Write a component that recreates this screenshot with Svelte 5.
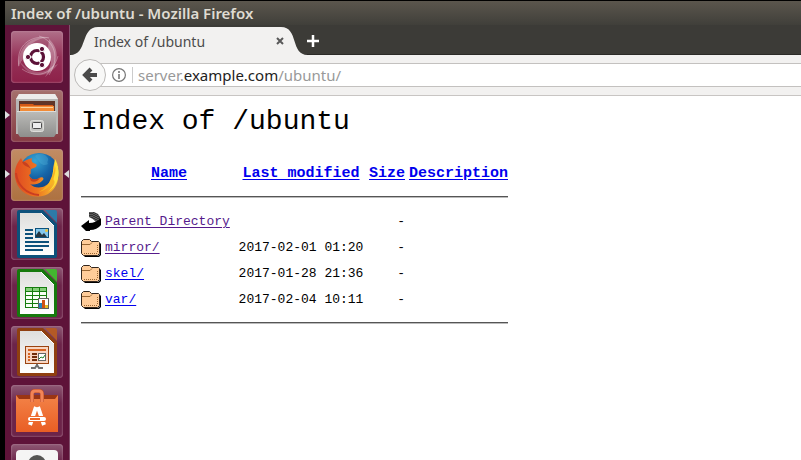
<script>
  const host = 'example.com';
  const path = '/ubuntu';

  const apps = [
    { id: 'dash', name: 'Search your computer' },
    { id: 'files', name: 'Files', running: true },
    { id: 'firefox', name: 'Firefox Web Browser', running: true, focused: true },
    { id: 'writer', name: 'Writer' },
    { id: 'calc', name: 'Calc' },
    { id: 'impress', name: 'Impress' },
    { id: 'software', name: 'Ubuntu Software' },
    { id: 'settings', name: 'System Settings' }
  ];

  // sheet colours of the office icons
  const office = {
    writer: { edge: '#0d517b', fold: '#2c7aa8' },
    calc: { edge: '#16790c', fold: '#43b62f' },
    impress: { edge: '#8f3f10', fold: '#b45a26' }
  };

  const entries = [
    { name: 'Parent Directory', href: '#parent', up: true, visited: true },
    { name: 'mirror/', href: '#mirror', date: '2017-02-01 01:20', visited: true },
    { name: 'skel/', href: '#skel', date: '2017-01-28 21:36' },
    { name: 'var/', href: '#var', date: '2017-02-04 10:11' }
  ];
</script>

<div class="desktop">
  <header class="titlebar">Index of {path} - Mozilla Firefox</header>

  <div class="workspace">
    <nav class="launcher" aria-label="Launcher">
      {#each apps as app}
        <button class="tile {app.id}" class:running={app.running} class:focused={app.focused} aria-label={app.name}>
          <svg viewBox="0 0 52 52" width="52" height="52">
            {#if app.id === 'dash'}
              <path d="M7 36C7 16 18 5 39 6C25 7 15 14 13 27Q10 30 7 36Z" fill="#fff" opacity=".25" />
              <path d="M38 8C49 18 49 34 34 46C41 35 42 26 37 17Z" fill="#fff" opacity=".3" />
              <path d="M47 33C36 49 18 48 8 30C20 43 31 44 42 35Z" fill="#fff" opacity=".2" />
              <path d="M8 35C4 15 20 3 38 7M28 5C44 10 49 27 38 44M47 25C42 44 25 48 11 38" fill="none" stroke="#fff" opacity=".3" />
              <circle cx="26" cy="26" r="14" fill="#fff" />
              <circle cx="26" cy="26" r="6.500" fill="none" stroke="#5c1238" stroke-width="3.200" />
              <path d="M26 26H16M26 26L31 17.500M26 26L31 34.500" stroke="#fff" stroke-width="1.200" />
              <g fill="#5c1238" stroke="#fff" stroke-width="1">
                <circle cx="17" cy="26" r="2.600" />
                <circle cx="31" cy="18" r="2.600" />
                <circle cx="31" cy="34" r="2.600" />
              </g>
            {:else if app.id === 'files'}
              <path d="M8 4H44L47 9V44H5V9Z" fill="#b8b8b6" />
              <path d="M8 4H44L47 9H5Z" fill="#ececea" />
              <rect x="8" y="11" width="36" height="12" fill="#603528" />
              <path d="M10 14H22L23 15H42V17H9V14Z" fill="#d55a16" />
              <rect x="9" y="16" width="34" height="6" fill="#f28b36" />
              <rect x="10" y="17" width="32" height="1" fill="#fbd29d" />
              <path d="M6 21H45V44L43 47H9L7 44Z" fill="url(#metal)" />
              <path d="M6 21.500H45" stroke="#dddddb" />
              <rect x="19.500" y="30.500" width="13" height="11" rx="2" fill="#c7c7c4" stroke="#dededb" />
              <rect x="21.500" y="32.500" width="9" height="6" rx="1" fill="#eee" stroke="#4b4b4b" />
            {:else if app.id === 'firefox'}
              <circle cx="28" cy="24" r="20" fill="url(#globe)" />
              <path d="M24 7C27 4 33 4 36 8C39 11 35 12 37 15C32 18 29 14 27 11Z" fill="#4ba9d4" opacity=".4" />
              <path d="M44 12C50 22 49 38 37 45C22 52 6 44 4 28C3 20 6 14 10 9L12 13C16 10 19 10 21 9C20 12 21 14 25 15C27 17 24 19 20 20C19 23 21 25 18 26C20 31 24 32 28 29C32 27 34 30 31 32C27 36 21 36 19 35C25 41 36 39 40 31C44 24 40 22 44 12Z" fill="url(#fox)" />
              <path d="M44 10C51 22 48 36 37 43C42 38 45 34 43 31L39 36C43 30 40 25 43 20C44 17 43 13 44 10Z" fill="#ffe13b" />
              <path d="M44 17C46 23 41 30 43 32C39 37 35 41 28 43C39 37 39 30 42 25Z" fill="#f8b321" />
              <path d="M11 13C14 12 17 14 20 20C17 17 13 18 11 13Z" fill="#c74020" />
              <path d="M18 27C20 31 24 31 29 29C27 32 23 34 20 32Z" fill="#c7421b" />
              <path d="M5 24C6 36 15 45 28 46" fill="none" stroke="#cb3e21" stroke-width="2" />
            {:else if office[app.id]}
              <path d="M8 2H32L46 16V48Q46 50 44 50H8Q6 50 6 48V4Q6 2 8 2Z" fill={office[app.id].edge} />
              <path d="M34 2H44Q46 2 46 4V15Z" fill={office[app.id].fold} />
              <path d="M9 5H30L43 18V47H9Z" fill="url(#paper)" />
              <path d="M30 5L43 18" stroke="#fff" stroke-width="1" />
              {#if app.id === 'writer'}
                <path d="M14 22H22M14 26H22M14 30H22M14 34H38M14 38H38M14 42H32" stroke="#0d517b" stroke-width="2" />
                <rect x="24.500" y="20.500" width="13" height="9" fill="#83c8ed" stroke="#0d517b" />
                <path d="M25 29V27L28 23L31 27L33 25L36 29Z" fill="#263640" />
                <circle cx="35.500" cy="22.500" r="1.500" fill="#edc43d" />
              {:else if app.id === 'calc'}
                <rect x="14.500" y="20.500" width="21" height="20" fill="#f8fff5" stroke="#167c0e" />
                <rect x="15" y="21" width="20" height="4" fill="#86ce7b" />
                <path d="M14 24.500H36M14 28.500H36M14 32.500H36M14 36.500H36M21.500 20V41M28.500 20V41" stroke="#167c0e" fill="none" />
                <rect x="27.500" y="31.500" width="10" height="10" fill="#fff" stroke="#606060" />
                <rect x="28" y="36" width="3" height="5" fill="#2584bd" />
                <rect x="31" y="33" width="3" height="8" fill="#d05117" />
                <rect x="34" y="38" width="3" height="3" fill="#e5ba26" />
              {:else}
                <rect x="14.500" y="20.500" width="23" height="17" fill="#f8d5c1" stroke="#9b430f" />
                <rect x="17" y="23" width="18" height="2" fill="#d66421" />
                <path d="M17 28H19M17 31H19M17 34H19" stroke="#d66421" stroke-width="2" />
                <path d="M21 28H26M21 31H26M21 34H26" stroke="#722d0a" stroke-width="2" />
                <rect x="27.500" y="27.500" width="7" height="7" fill="#fff" stroke="#666" />
                <path d="M28 33L30 31L32 32L34 29" stroke="#22842b" fill="none" />
                <path d="M26 38V40M20 42H24L26 39L28 42H32" stroke="#707070" stroke-width="2" fill="none" />
              {/if}
            {:else if app.id === 'software'}
              <path d="M5 10H47V16H5Z" fill="#9b3514" />
              <path d="M5 10L8 14H44L47 10V47H5Z" fill="url(#bag)" />
              <path d="M21 17V9Q21 6 24 6H28Q31 6 31 9V17" fill="none" stroke="#bb4b25" stroke-width="4" />
              <path d="M21 17V9Q21 6 24 6H28Q31 6 31 9V17" fill="none" stroke="#f28457" stroke-width="3" />
              <g stroke="#fff" stroke-width="4">
                <line x1="25" y1="22" x2="19" y2="40" />
                <line x1="27" y1="22" x2="33" y2="40" />
              </g>
              <rect x="16" y="31" width="20" height="6" rx="2" fill="#ee6c2f" />
              <rect x="17" y="32" width="18" height="4" rx="2" fill="#fff" />
              <rect x="19" y="33" width="10" height="2" fill="#ed6728" />
            {:else}
              <rect x="5" y="6" width="42" height="42" rx="4" fill="#f5f5f4" />
              <circle cx="26" cy="20" r="9" fill="#555553" />
              <circle cx="26" cy="22" r="4" fill="#bbb" />
            {/if}
          </svg>
        </button>
      {/each}
    </nav>

    <div class="browser">
      <div class="tabs">
        <div class="tab">
          <svg class="tab-shape" viewBox="0 0 238 29" preserveAspectRatio="none">
            <path d="M0 29C18 29 10 1 28 1H211C229 1 220 29 238 29Z" fill="#f2f1f0" />
          </svg>
          <span class="tab-title">Index of {path}</span>
          <button class="icon-button" aria-label="Close tab">
            <svg viewBox="0 0 8 8" width="8" height="8"><path d="M1 1L7 7M7 1L1 7" stroke="#595959" stroke-width="2" /></svg>
          </button>
        </div>
        <button class="icon-button new-tab" aria-label="New tab">
          <svg viewBox="0 0 14 14" width="14" height="14"><path d="M7 1V13M1 7H13" stroke="#fff" stroke-width="2.500" /></svg>
        </button>
      </div>

      <div class="toolbar">
        <button class="back" aria-label="Back">
          <svg viewBox="0 0 16 16" width="16" height="16"><path d="M9 2L3 8L9 14M3 8H15" fill="none" stroke="#4a4a4a" stroke-width="4" /></svg>
        </button>
        <div class="urlbar">
          <svg viewBox="0 0 14 14" width="14" height="14">
            <circle cx="7" cy="7" r="6.400" fill="none" stroke="#777" stroke-width="1.200" />
            <path d="M7 6V11M7 3V5" stroke="#777" stroke-width="1.600" />
          </svg>
          <span class="url">server.<b>{host}</b>{path}/</span>
        </div>
      </div>

      <main class="page">
        <h1>Index of {path}</h1>
        <table>
          <colgroup>
            <col class="c-icon" /><col class="c-name" /><col class="c-date" /><col class="c-size" /><col class="c-desc" />
          </colgroup>
          <thead>
            <tr>
              <th></th>
              <th><a href="#name">Name</a></th>
              <th><a href="#modified">Last modified</a></th>
              <th><a href="#size">Size</a></th>
              <th class="right"><a href="#description">Description</a></th>
            </tr>
          </thead>
          <tbody>
            <tr class="rule"><td colspan="5"><hr /></td></tr>
            {#each entries as entry}
              <tr class="entry">
                <td>
                  <svg viewBox="0 0 20 22" width="20" height="22">
                    {#if entry.up}
                      <path d="M8 1H13L17 3L19 6V9L15 11L12 8L8 6Z" fill="#333" />
                      <path d="M9 1V6M11 1V7M13 2V9M15 3V10M17 4V10" stroke="#888" stroke-dasharray="1 1" />
                      <path d="M0 15L8 9V12Q15 12 20 7V14Q16 19 9 19V20H5Z" fill="#000" />
                    {:else}
                      <path d="M3 19H17L19 17V6L20 7V18L18 20H4Z" fill="#000" />
                      <path d="M.5 4.500L2.500 2.500H8.500L10.500 4.500H17.500L18.500 5.500V16.500L16.500 18.500H2.500L.5 16.500Z" fill="#ffcc99" stroke="#33261d" />
                      <path d="M1 7.500H9L11 5.500" fill="none" stroke="#996633" />
                      <path d="M3 16.500H16M16.500 8V16" stroke="#996633" stroke-dasharray="1 1" />
                    {/if}
                  </svg>
                </td>
                <td><a class:visited={entry.visited} href={entry.href}>{entry.name}</a></td>
                <td class="center">{entry.date ?? ''}</td>
                <td class="right">-</td>
                <td></td>
              </tr>
            {/each}
            <tr class="rule"><td colspan="5"><hr /></td></tr>
          </tbody>
        </table>
      </main>
    </div>
  </div>

  <!-- shared gradients -->
  <svg class="defs" width="0" height="0" aria-hidden="true">
    <defs>
      <linearGradient id="metal" x1="0" y1="0" x2="0" y2="1"><stop offset="0" stop-color="#bcbcb9" /><stop offset="1" stop-color="#8e8e8c" /></linearGradient>
      <linearGradient id="paper" x1="0" y1="0" x2="0" y2="1"><stop offset="0" stop-color="#dededc" /><stop offset="1" stop-color="#fff" /></linearGradient>
      <linearGradient id="bag" x1="0" y1="0" x2="0" y2="1"><stop offset="0" stop-color="#f38348" /><stop offset="1" stop-color="#e95e24" /></linearGradient>
      <linearGradient id="fox" x1="0" y1="0" x2="1" y2="0"><stop offset="0" stop-color="#df4a22" /><stop offset=".5" stop-color="#ed7420" /><stop offset="1" stop-color="#fac72e" /></linearGradient>
      <radialGradient id="globe" cx=".4" cy=".2" r=".8"><stop offset="0" stop-color="#37a6d5" /><stop offset=".5" stop-color="#1665a8" /><stop offset="1" stop-color="#103a79" /></radialGradient>
    </defs>
  </svg>
</div>

<style>
  :global(body) {
    background: #000;
  }

  .desktop {
    box-sizing: border-box;
    height: 100vh;
    display: flex;
    flex-direction: column;
    padding: 1px 0 0 5px;
    overflow: hidden;
    font-family: "Noto Sans", "Open Sans", sans-serif;
    font-size: 15px;
  }

  .titlebar {
    flex: none;
    padding-left: 6px;
    line-height: 24px;
    font-weight: 600;
    color: #dfdbd2;
    background: linear-gradient(#5b564d, #403f3a);
  }

  .workspace {
    flex: 1;
    min-height: 0;
    display: flex;
  }

  .launcher {
    flex: none;
    display: flex;
    flex-direction: column;
    gap: 7px;
    padding: 6px;
    background: #5e1339;
    border-right: 1px solid #81506b;
    overflow: hidden;
  }

  button {
    padding: 0;
    border: 0;
    background: none;
    cursor: pointer;
  }

  svg {
    display: block;
  }

  .tile {
    position: relative;
    flex: none;
    width: 52px;
    height: 52px;
    border-radius: 4px;
    background: linear-gradient(#8d5873, #6c2449 35%, #6c2449);
    box-shadow: inset 0 0 2px #c199ad;
  }

  .dash { background: linear-gradient(#b07089, #963258 50%, #8d2149); }
  .files { background: linear-gradient(#a5716c, #863b43); }
  .firefox { background: linear-gradient(#c28c64, #ad7140); }

  .running::before,
  .focused::after {
    content: '';
    position: absolute;
    top: 21px;
    border: 4px solid transparent;
  }

  .running::before {
    left: -6px;
    border-left: 5px solid #ddd;
    border-right: 0;
  }

  .focused::after {
    right: -6px;
    border-right: 5px solid #ddd;
    border-left: 0;
  }

  .browser {
    flex: 1;
    min-width: 0;
    display: flex;
    flex-direction: column;
  }

  .tabs {
    display: flex;
    height: 30px;
    background: #3c3b37;
    box-shadow: inset 0 -1px #2b2a27;
  }

  .tab {
    position: relative;
    display: flex;
    align-items: center;
    justify-content: space-between;
    box-sizing: border-box;
    width: 238px;
    padding: 2px 24px 0;
    font-size: 14px;
    color: #4c4c4c;
  }

  .tab-shape {
    position: absolute;
    left: 0;
    top: 1px;
    width: 100%;
    height: 29px;
  }

  .tab-title,
  .tab .icon-button {
    position: relative;
  }

  .new-tab {
    margin-left: -2px;
    padding: 2px 0 0;
    display: flex;
    align-items: center;
  }

  .toolbar {
    display: flex;
    align-items: center;
    height: 40px;
    padding-left: 4px;
    background: #f2f1f0;
    border-bottom: 1px solid #c8c5c3;
  }

  .back {
    position: relative;
    z-index: 1;
    flex: none;
    display: grid;
    place-items: center;
    width: 32px;
    height: 32px;
    border: 1px solid #bcbab8;
    border-radius: 50%;
    background: #f8f8f7;
  }

  .urlbar {
    flex: 1;
    display: flex;
    align-items: center;
    gap: 6px;
    height: 22px;
    margin-left: -6px;
    padding-left: 12px;
    border: 1px solid #c3c1bf;
    border-width: 1px 0;
    background: #fff;
  }

  .url {
    padding-left: 5px;
    border-left: 1px solid #ccc;
    line-height: 16px;
    color: #999;
  }

  .url b {
    font-weight: 400;
    color: #222;
  }

  .page {
    flex: 1;
    padding: 9px 11px;
    background: #fff;
    color: #000;
    font-family: "Liberation Mono", monospace;
    font-size: 13px;
  }

  h1 {
    margin: 0 0 22px;
    font-size: 28px;
    line-height: 34px;
    font-weight: 400;
  }

  table {
    table-layout: fixed;
    width: 427px;
    border-collapse: collapse;
  }

  .c-icon { width: 24px; }
  .c-name { width: 128px; }
  .c-date { width: 136px; }
  .c-size { width: 36px; }
  .c-desc { width: 103px; }

  th, td {
    padding: 0;
    line-height: 18px;
    white-space: nowrap;
  }

  th {
    height: 25px;
    font-size: 15px;
  }

  .entry td {
    height: 24px;
    padding-top: 2px;
  }

  .center { text-align: center; }
  .right { text-align: right; }

  .rule td {
    height: 22px;
  }

  hr {
    margin: 10px 0;
    border: 0;
    border-top: 1px solid #555;
    border-bottom: 1px solid #bbb;
  }

  a {
    color: #0000ee;
    text-underline-offset: 2px;
  }

  a.visited {
    color: #551a8b;
  }

  .defs {
    position: absolute;
  }
</style>
